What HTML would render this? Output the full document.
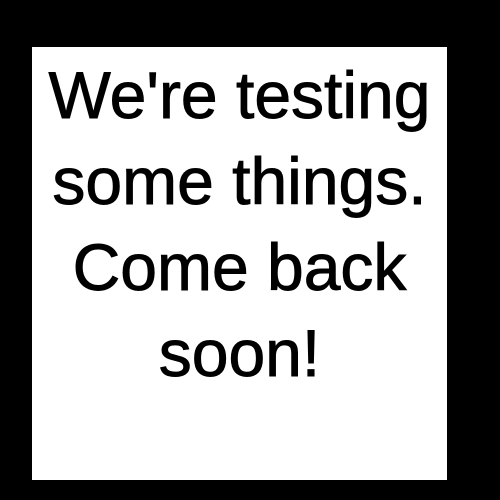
<!DOCTYPE html>
<html><head><meta charset="utf-8"><style>
html,body{margin:0;padding:0;background:#000;width:500px;height:500px;overflow:hidden}
.box{position:absolute;left:32px;top:47px;width:415px;height:433px;background:#fff}
.t{position:absolute;left:0;top:5px;width:415px;text-align:center;font-family:"Liberation Sans",sans-serif;font-size:66px;line-height:86px;color:#000;white-space:nowrap;-webkit-text-stroke:0.9px #000}
</style></head><body>
<div class="box"><div class="t">We're testing<br>some things.<br>Come back<br>soon!</div></div>
</body></html>
